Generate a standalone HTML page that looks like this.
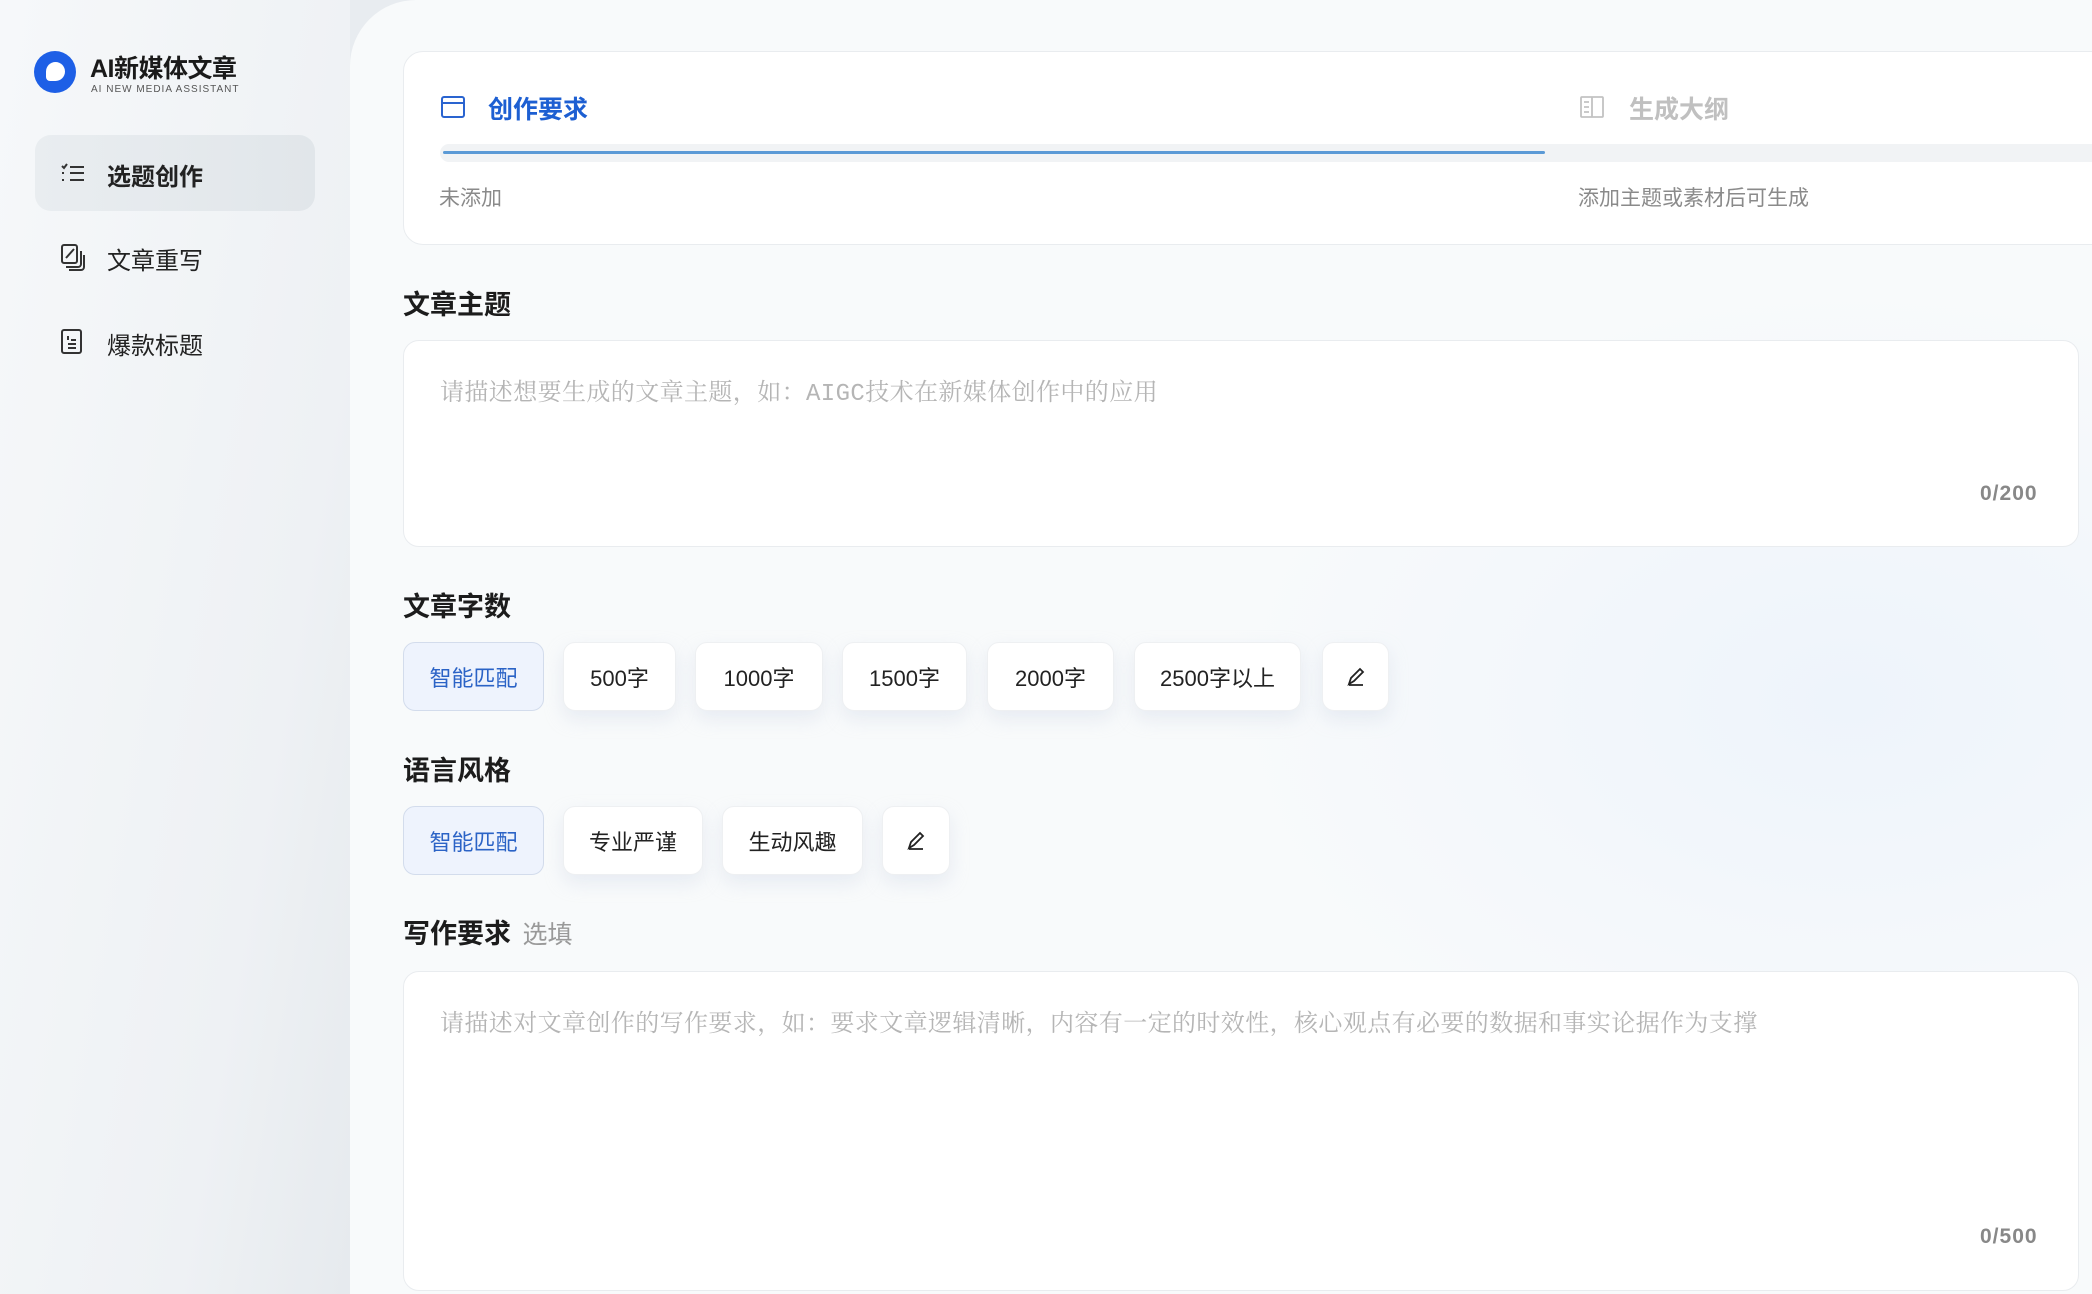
<!DOCTYPE html>
<html><head><meta charset="utf-8"><style>
*{margin:0;padding:0;box-sizing:border-box}
body{width:2092px;height:1294px;overflow:hidden;font-family:"Liberation Sans","Noto Sans CJK SC",sans-serif;background:linear-gradient(90deg,#f5f7f9,#e8ecf0 350px);position:relative}
.side{position:absolute;left:0;top:0;width:350px;height:1294px;background:linear-gradient(100deg,#f6f8fa 0%,#eef1f4 70%,#e6eaee 100%)}
.logo{position:absolute;left:34px;top:51px;width:42px;height:42px;border-radius:50%;background:#1d5fe6}
.logo:after{content:"";position:absolute;left:12px;top:11px;width:19px;height:19px;background:#fff;border-radius:50% 50% 50% 4px}
.t1{position:absolute;left:90px;top:49px;font-size:25px;font-weight:bold;color:#1a1a1a;letter-spacing:-0.5px}
.t2{position:absolute;left:91px;top:84px;font-size:10px;color:#555;letter-spacing:1px}
.act{position:absolute;left:35px;top:135px;width:280px;height:76px;border-radius:16px;background:linear-gradient(90deg,#e9edf0,#e1e6ea)}
.mi{position:absolute;left:107px;font-size:24px;color:#222}
.ic{position:absolute;left:60px}
.main{position:absolute;left:350px;top:0;width:1742px;height:1294px;border-top-left-radius:66px;background:radial-gradient(ellipse 900px 600px at 1500px 700px,#eef4fb,rgba(247,249,251,0) 70%),#f8fafb}
.card{position:absolute;background:#fff;border:1.5px solid #e9ecef;border-radius:20px}
h3{position:absolute;left:403px;font-size:27px;font-weight:bold;color:#1c1c1c}
.ph{position:absolute;left:440px;font-family:"Liberation Mono","Noto Serif CJK SC",serif;font-size:24px;color:#b5b5b5;letter-spacing:0.4px}
.cnt{position:absolute;font-size:21px;color:#888;font-weight:bold;letter-spacing:1px}
.b{position:absolute;height:69px;border-radius:12px;background:#fff;border:1.5px solid #eef0f2;box-shadow:0 8px 18px rgba(200,210,225,.35);font-size:22px;color:#222;display:flex;align-items:center;justify-content:center}
.b.on{background:#eef3fd;border-color:#d3dcec;color:#2b63c6;box-shadow:none}
</style></head><body>
<div class="side">
<div class="logo"></div>
<div class="t1">AI新媒体文章</div>
<div class="t2">AI NEW MEDIA ASSISTANT</div>
<div class="act"></div>
<svg class="ic" style="top:162px" width="26" height="22" viewBox="0 0 26 22" fill="none" stroke="#333" stroke-width="2"><path d="M2 4l2 2 3-4M10 5h14M2 11h2M10 11h14M2 18h2M10 18h14"/></svg>
<div class="mi" style="top:157px;font-weight:bold">选题创作</div>
<svg class="ic" style="top:243px" width="26" height="28" viewBox="0 0 26 28" fill="none" stroke="#333" stroke-width="2"><rect x="2" y="2" width="15" height="18" rx="2"/><path d="M6 24h12a3 3 0 0 0 3-3V8M9 27h12a3 3 0 0 0 3-3V12M6 15l8-9"/></svg>
<div class="mi" style="top:241px">文章重写</div>
<svg class="ic" style="top:328px" width="24" height="28" viewBox="0 0 24 28" fill="none" stroke="#333" stroke-width="2"><rect x="2" y="2" width="19" height="23" rx="2"/><path d="M8 8v4M8 16h8M8 20h8M11 12h5"/></svg>
<div class="mi" style="top:326px">爆款标题</div>
</div>
<div class="main"></div>
<div class="card" style="left:403px;top:51px;width:1720px;height:194px"></div>
<svg style="position:absolute;left:441px;top:96px" width="24" height="22" viewBox="0 0 24 22" fill="none" stroke="#2a64d0" stroke-width="2"><rect x="1" y="1" width="22" height="20" rx="2"/><path d="M1 7h22"/></svg>
<div style="position:absolute;left:488px;top:90px;font-size:25px;font-weight:bold;color:#1d5fd2">创作要求</div>
<svg style="position:absolute;left:1580px;top:96px" width="24" height="22" viewBox="0 0 24 22" fill="none" stroke="#c2c2c2" stroke-width="1.8"><rect x="1" y="1" width="22" height="20" rx="1"/><path d="M12 1v20M4 6h5M4 11h5M4 16h5"/></svg>
<div style="position:absolute;left:1629px;top:90px;font-size:25px;font-weight:bold;color:#c0c0c0">生成大纲</div>
<div style="position:absolute;left:440px;top:144px;width:1652px;height:18px;background:#f1f3f5;border-radius:9px 0 0 9px"></div>
<div style="position:absolute;left:443px;top:151px;width:1102px;height:3px;background:#5b9ad6;border-radius:2px"></div>
<div style="position:absolute;left:439px;top:182px;font-size:21px;color:#8a8a8a">未添加</div>
<div style="position:absolute;left:1578px;top:182px;font-size:21px;color:#8a8a8a">添加主题或素材后可生成</div>
<h3 style="top:283px">文章主题</h3>
<div class="card" style="left:403px;top:340px;width:1676px;height:207px;border-radius:16px"></div>
<div class="ph" style="top:372px">请描述想要生成的文章主题，如：AIGC技术在新媒体创作中的应用</div>
<div class="cnt" style="left:1980px;top:482px">0/200</div>
<h3 style="top:585px">文章字数</h3>
<div class="b on" style="left:403px;top:642px;width:141px">智能匹配</div>
<div class="b" style="left:563px;top:642px;width:113px">500字</div>
<div class="b" style="left:695px;top:642px;width:128px">1000字</div>
<div class="b" style="left:842px;top:642px;width:125px">1500字</div>
<div class="b" style="left:987px;top:642px;width:127px">2000字</div>
<div class="b" style="left:1134px;top:642px;width:167px">2500字以上</div>
<div class="b" style="left:1322px;top:642px;width:67px"><svg width="20" height="20" viewBox="0 0 20 20" fill="none" stroke="#222" stroke-width="1.8"><path d="M3 17l2-6 9-9 3 3-9 9-5 3zM3 18h14"/></svg></div>
<h3 style="top:749px">语言风格</h3>
<div class="b on" style="left:403px;top:806px;width:141px">智能匹配</div>
<div class="b" style="left:563px;top:806px;width:140px">专业严谨</div>
<div class="b" style="left:722px;top:806px;width:141px">生动风趣</div>
<div class="b" style="left:882px;top:806px;width:68px"><svg width="20" height="20" viewBox="0 0 20 20" fill="none" stroke="#222" stroke-width="1.8"><path d="M3 17l2-6 9-9 3 3-9 9-5 3zM3 18h14"/></svg></div>
<h3 style="top:912px">写作要求 <span style="font-weight:normal;color:#999;font-size:25px;margin-left:4px">选填</span></h3>
<div class="card" style="left:403px;top:971px;width:1676px;height:320px;border-radius:16px"></div>
<div class="ph" style="top:1003px">请描述对文章创作的写作要求，如：要求文章逻辑清晰，内容有一定的时效性，核心观点有必要的数据和事实论据作为支撑</div>
<div class="cnt" style="left:1980px;top:1225px">0/500</div>
</body></html>
